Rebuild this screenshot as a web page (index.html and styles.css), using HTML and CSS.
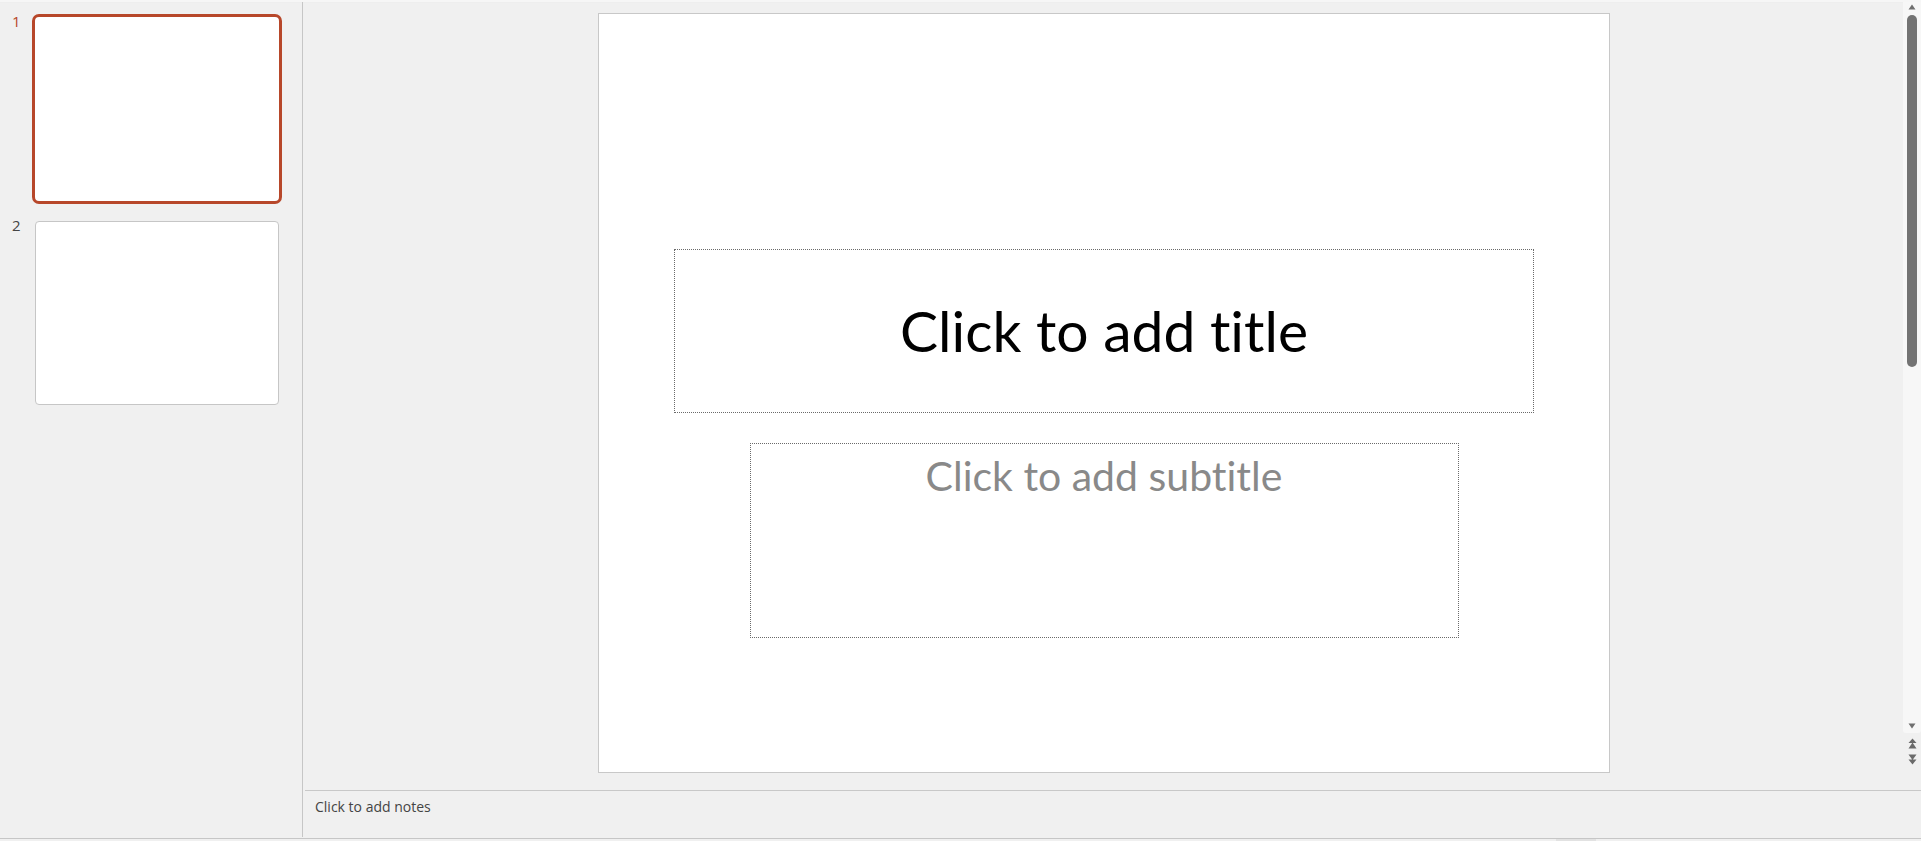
FILE: index.html
```html
<!DOCTYPE html>
<html lang="en">
<head>
<meta charset="utf-8">
<title>Presentation</title>
<link rel="stylesheet" href="styles.css">
</head>
<body>
<div class="app">
  <div class="main">
    <aside class="slides-panel">
      <div class="thumb-row">
        <span class="thumb-num active">1</span>
        <div class="thumb-wrap">
          <div class="thumb selected"></div>
        </div>
      </div>
      <div class="thumb-row">
        <span class="thumb-num">2</span>
        <div class="thumb-wrap">
          <div class="thumb"></div>
        </div>
      </div>
    </aside>
    <div class="panel-sep"></div>
    <section class="work">
      <div class="edit-row">
        <div class="editor">
          <div class="slide">
            <div class="ph ph-title"><span>Click to add title</span></div>
            <div class="ph ph-sub"><span>Click to add subtitle</span></div>
          </div>
        </div>
        <div class="vscroll">
          <div class="track">
            <svg class="arrow-up" width="8" height="6" viewBox="0 0 8 6"><path d="M4 0.5 L7.5 5.5 L0.5 5.5 Z" fill="#6f6f6f"/></svg>
            <div class="thumb-bar"></div>
            <div class="track-fill"></div>
            <svg class="arrow-down" width="8" height="6" viewBox="0 0 8 6"><path d="M0.5 0.5 L7.5 0.5 L4 5.5 Z" fill="#6f6f6f"/></svg>
          </div>
          <div class="nav-btns">
            <svg width="9" height="11" viewBox="0 0 9 11"><path d="M4.5 0.5 L8.5 5 L0.5 5 Z M4.5 4.5 L8.5 10.5 L0.5 10.5 Z" fill="#6a6a6a"/></svg>
            <svg width="9" height="11" viewBox="0 0 9 11"><path d="M0.5 0.5 L8.5 0.5 L4.5 6 Z M0.5 5.5 L8.5 5.5 L4.5 10.5 Z" fill="#6a6a6a"/></svg>
          </div>
        </div>
      </div>
      <div class="notes">Click to add notes</div>
    </section>
  </div>
  <div class="status-strip"><span class="handle"></span></div>
</div>
</body>
</html>
```

FILE: styles.css
```css
* { box-sizing: border-box; }
html, body {
  margin: 0;
  padding: 0;
  width: 1921px;
  height: 841px;
  overflow: hidden;
  background: #f0f0f0;
}
.app {
  display: flex;
  flex-direction: column;
  width: 1921px;
  height: 841px;
  font-family: "Open Sans", "Noto Sans", sans-serif;
  background: #f0f0f0;
}
.main {
  display: flex;
  flex: none;
  height: 838px;
  border-top: 2px solid #f6f6f6;
  box-shadow: inset 0 1px 1px -1px #e0e0e0;
}
.slides-panel {
  width: 302px;
  flex: none;
  display: flex;
  flex-direction: column;
  gap: 14px;
  padding-top: 12px;
}
.thumb-row {
  display: flex;
  align-items: flex-start;
}
.thumb-num {
  width: 32px;
  padding-left: 12px;
  font-size: 15px;
  line-height: 1;
  margin-top: 0;
  color: #444444;
}
.thumb-num.active { color: #b7472a; }
.thumb-wrap {
  width: 250px;
  height: 190px;
  padding: 3px;
}
.thumb {
  width: 244px;
  height: 184px;
  background: #ffffff;
  border: 1px solid #c6c6c6;
  border-radius: 4px;
}
.thumb.selected {
  width: 250px;
  height: 190px;
  margin: -3px;
  border: 3px solid #b7472a;
  border-radius: 7px;
}
.panel-sep {
  width: 1px;
  flex: none;
  background: #c6c6c6;
  margin-bottom: 1px;
}
.work {
  flex: 1;
  display: flex;
  flex-direction: column;
  min-width: 0;
}
.edit-row {
  display: flex;
  flex: none;
  height: 788px;
}
.editor {
  flex: 1;
  display: flex;
  justify-content: center;
  padding-top: 11px;
  padding-left: 2px;
}
.slide {
  width: 1012px;
  height: 760px;
  background: #ffffff;
  border: 1px solid #c8c8c8;
  display: flex;
  flex-direction: column;
  align-items: center;
  padding-top: 235px;
  font-family: Lato, "Open Sans", sans-serif;
  font-variant-ligatures: none;
  font-feature-settings: "liga" 0, "clig" 0;
}
.ph {
  border: 1px dotted #6a6a6a;
}
.ph-title {
  width: 860px;
  height: 164px;
  display: flex;
  align-items: center;
  justify-content: center;
  font-size: 57px;
  padding-bottom: 2px;
  color: #000000;
}
.ph-sub {
  width: 709px;
  height: 195px;
  margin-top: 30px;
  padding-top: 11px;
  text-align: center;
  font-size: 41px;
  line-height: 1;
  color: #898989;
}
.vscroll {
  width: 18px;
  flex: none;
  display: flex;
  flex-direction: column;
}
.track {
  height: 731px;
  flex: none;
  background: #f7f7f7;
  border-radius: 0 0 3px 3px;
  display: flex;
  flex-direction: column;
  align-items: center;
  padding-top: 2px;
}
.arrow-up { display: block; }
.thumb-bar {
  width: 10px;
  height: 352px;
  margin-top: 5px;
  background: #737373;
  border-radius: 5px;
}
.track-fill { flex: 1; }
.arrow-down { display: block; margin-bottom: 4px; }
.nav-btns {
  display: flex;
  flex-direction: column;
  align-items: center;
  gap: 5px;
  padding-top: 5px;
}
.nav-btns svg { display: block; }
.notes {
  flex: none;
  height: 48px;
  margin-left: 2px;
  border-top: 1px solid #c8c8c8;
  padding: 7px 0 0 10px;
  font-size: 14px;
  line-height: 18px;
  color: #444444;
}
.status-strip {
  flex: none;
  height: 3px;
  border-top: 1px solid #c6c6c6;
  background: #f0f0f0;
  position: relative;
}
.handle {
  position: absolute;
  left: 1556px;
  top: 0;
  width: 40px;
  height: 2px;
  background: #e2e2e2;
}
```
